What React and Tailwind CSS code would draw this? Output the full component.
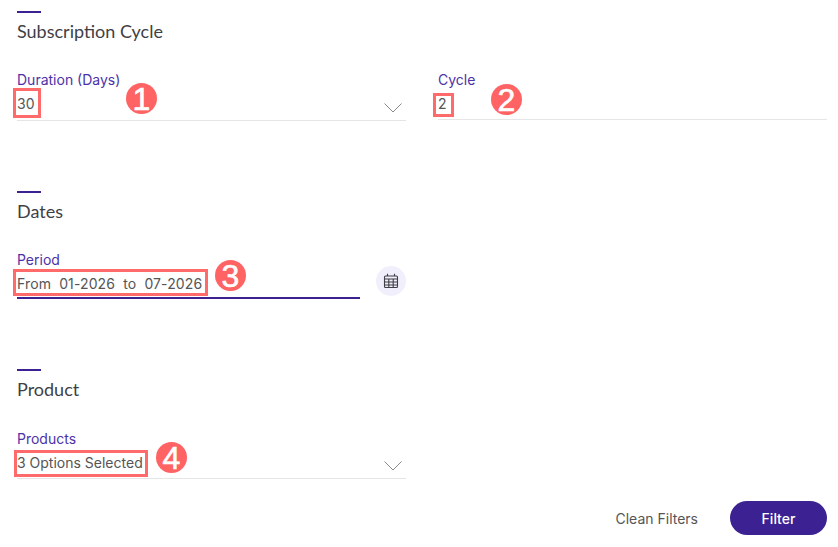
import React from 'react';

const inter = "font-['Inter',sans-serif]";

const Chevron = ({ className = 'top-[12px]' }) => (
  <svg width="20" height="12" viewBox="0 0 20 12" fill="none" className={`absolute right-[3px] ${className}`}>
    <path d="M1.5 1.5 L10 10 L18.5 1.5" stroke="#8a8a8a" strokeWidth="1" />
  </svg>
);

const CalendarIcon = () => (
  <svg width="16" height="16" viewBox="0 0 16 16" fill="none" stroke="#3f3f46" strokeWidth="1.1">
    <rect x="1.5" y="3" width="13" height="11.5" rx="1" />
    <path d="M4.5 0.8 V3 M11.5 0.8 V3 M1.5 6 H14.5 M1.5 9 H14.5 M1.5 12 H14.5 M5.8 6 V14.5 M10.2 6 V14.5" />
  </svg>
);

// red callout number from the screenshot
const Badge = ({ n, className }) => (
  <div className={`absolute w-[31px] h-[31px] rounded-full bg-[#ff6363] text-white flex items-center justify-center text-[32px] leading-none tracking-normal font-['Liberation_Sans',sans-serif] [-webkit-text-stroke:0.6px_white] ${className}`}>
    {n}
  </div>
);

const Section = ({ title, height, children }) => (
  <section className={height}>
    <div className="w-6 h-0.5 bg-[#3b2191]" />
    <h2 className="mt-[6px] h-6 text-[18px] leading-6 text-[#3f3f46] font-['Lato',sans-serif]">{title}</h2>
    {children}
  </section>
);

const Field = ({ label, value, line = 'border-b border-[#e5e5e5]', valueHeight = 'h-[30px]', box, children }) => (
  <div className={`relative ${line}`}>
    <div className="text-[14px] leading-5 text-[#4c32a8]">{label}</div>
    <div className={`relative ${valueHeight} pt-[4px] text-[14px] leading-5 text-[#555] whitespace-pre`}>
      {value}
      {box && <div className={`absolute border-[3px] border-[#ff6b6b] ${box}`} />}
      {children}
    </div>
  </div>
);

export default function App() {
  return (
    <div className={`relative w-[838px] h-[547px] overflow-hidden bg-white pt-[11px] px-[17px] ${inter}`}>
      <Section title="Subscription Cycle" height="h-[180px]">
        <div className="mt-[27px] grid grid-cols-[389px_389px] gap-x-[32px] items-start">
          <Field label="Duration (Days)" value="30" box="-left-1 top-[-2px] w-[28px] h-[30px]">
            <Chevron />
            <Badge n="1" className="left-[109px] top-[-7px]" />
          </Field>
          <Field label="Cycle" value="2" valueHeight="h-[29px]" box="-left-[5px] top-[3px] w-[21px] h-[24px]">
            <Badge n="2" className="left-[53px] top-[-6px]" />
          </Field>
        </div>
      </Section>

      <Section title="Dates" height="h-[178px]">
        <div className="mt-[27px] flex items-start w-[389px]">
          <div className="w-[343px]">
            <Field label="Period" value="From  01-2026  to  07-2026" valueHeight="h-[27px] tracking-[0.12px]" line="border-b-2 border-[#3b2191]" box="-left-1 top-[-1px] w-[195px] h-[27px]">
              <Badge n="3" className="left-[198px] top-[-10px]" />
            </Field>
          </div>
          <button className="ml-auto mt-[16px] w-[30px] h-[30px] rounded-full bg-[#f1effb] flex items-center justify-center">
            <CalendarIcon />
          </button>
        </div>
      </Section>

      <Section title="Product" height="h-[130px]">
        <div className="mt-[28px] w-[389px]">
          <Field label="Products" value="3 Options Selected" valueHeight="h-[29px]" box="-left-[3px] top-[1px] w-[134px] h-[27px]">
            <Chevron className="top-[11px]" />
            <Badge n="4" className="left-[139px] top-[-7px]" />
          </Field>
        </div>
      </Section>

      <div className="flex justify-end items-center w-[810px] mt-[2px]">
        <button className="text-[14px] text-[#555] mr-[32px]">Clean Filters</button>
        <button className="w-[97px] h-[34px] rounded-full bg-[#3b2191] text-white text-[14px] font-medium">Filter</button>
      </div>
    </div>
  );
}
